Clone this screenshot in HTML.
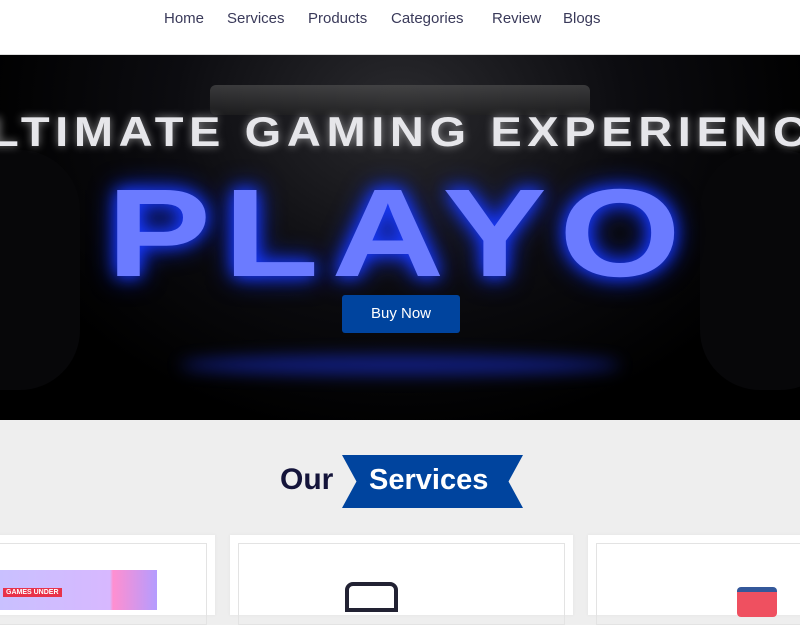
<!DOCTYPE html>
<html><head><style>
*{margin:0;padding:0;box-sizing:border-box}
body{width:800px;height:600px;overflow:hidden;background:#eee;font-family:"Liberation Sans",sans-serif;position:relative}
nav{position:absolute;top:0;left:0;width:800px;height:55px;background:#fff;border-bottom:1px solid #ddd}
nav span{position:absolute;top:10px;font-size:15px;color:#3a3a5a}
.hero{position:absolute;top:55px;left:0;width:800px;height:365px;background:radial-gradient(ellipse at 50% 15%,#2a2a2e 0%,#0c0c10 40%,#000 75%);overflow:hidden}
.bar{position:absolute;left:210px;top:30px;width:380px;height:30px;background:linear-gradient(#555,#222);border-radius:6px;opacity:.6}
.grip{position:absolute;top:95px;width:140px;height:240px;border-radius:60px;background:#070709}
.t1{position:absolute;top:53px;left:-100px;width:1000px;text-align:center;font:bold 42px "Liberation Sans",sans-serif;color:#e6e6ea;letter-spacing:5px;text-shadow:0 0 8px rgba(255,255,255,.5);transform:scaleX(1.12)}
.t2{position:absolute;top:116px;left:0;width:800px;text-align:center;font:bold 125px "Liberation Sans",sans-serif;color:#6b7bff;letter-spacing:10px;text-shadow:0 0 14px #1a3cff,0 0 24px #1030ff;line-height:125px;transform:scaleX(1.25)}
.btn{position:absolute;left:342px;top:240px;width:118px;height:38px;background:#00449e;border-radius:3px;color:#fff;font-size:15px;text-align:center;line-height:38px}
.glow{position:absolute;left:180px;top:300px;width:440px;height:20px;border-radius:50%;background:#1a2fd0;filter:blur(8px);opacity:.6}
.h{position:absolute;top:463px;left:280px;font:bold 30px "Liberation Sans",sans-serif;color:#14143a}
.rib{position:absolute;left:342px;top:455px;width:181px;height:53px;background:#00449e;clip-path:polygon(0 0,100% 0,92% 50%,100% 100%,0 100%,8% 50%)}
.rib span{position:absolute;left:27px;top:9px;font:bold 29px "Liberation Sans",sans-serif;color:#fff}
.card{position:absolute;top:535px;height:80px;background:#fff;box-shadow:0 0 4px rgba(0,0,0,.05)}
.card i{position:absolute;left:8px;right:8px;top:8px;bottom:-10px;border:1px solid #e3e3e3}
</style></head><body>
<nav>
<span style="left:164px">Home</span><span style="left:227px">Services</span><span style="left:308px">Products</span><span style="left:391px">Categories</span><span style="left:492px">Review</span><span style="left:563px">Blogs</span>
</nav>
<div class="hero">
<div class="bar"></div>
<div class="grip" style="left:-60px"></div><div class="grip" style="left:700px"></div>
<div class="t1">ULTIMATE GAMING EXPERIENCE</div>
<div class="t2">PLAYO</div>
<div class="btn">Buy Now</div>
<div class="glow"></div>
</div>
<div class="h">Our</div>
<div class="rib"><span>Services</span></div>
<div class="card" style="left:-10px;width:225px"><i></i>
<div style="position:absolute;left:10px;top:35px;width:157px;height:40px;background:linear-gradient(90deg,#c9c0ff,#d7b8ff 70%,#ff8fd0 72%,#b49cff)"></div>
<div style="position:absolute;left:13px;top:53px;background:#e8324a;color:#fff;font:bold 7px sans-serif;padding:1px 3px">GAMES UNDER</div></div>
<div class="card" style="left:230px;width:343px"><i></i>
<div style="position:absolute;left:115px;top:47px;width:53px;height:30px;border:4px solid #223;border-radius:8px 8px 0 0"></div></div>
<div class="card" style="left:588px;width:230px"><i></i>
<div style="position:absolute;left:149px;top:52px;width:40px;height:30px;background:#ef5060;border-top:5px solid #34589a;border-radius:4px"></div></div>
</body></html>
